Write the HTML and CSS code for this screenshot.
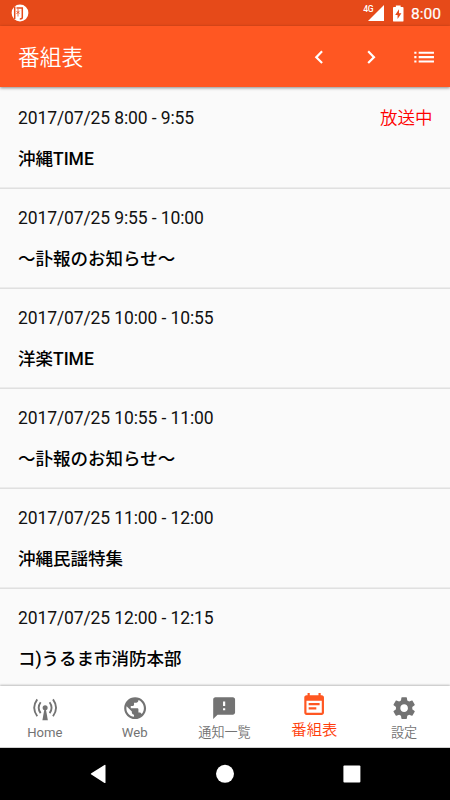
FILE: index.html
```html
<!DOCTYPE html>
<html lang="ja">
<head>
<meta charset="utf-8">
<title>番組表</title>
<link rel="stylesheet" href="styles.css">
</head>
<body>
<div class="screen">
  <div class="status">
    <svg class="status-app" viewBox="0 0 18 18"><circle cx="9" cy="9" r="8.4" fill="#fff"/><path d="M3.700 2.500v12.500M5.500 4h5.800v9.500q0 1.500-2.500 1.500" fill="none" stroke="#e64a19" stroke-width="1.500"/><path d="M7 5v7.500M5.400 7.400l3.200 2M8.600 6.800l-3.200 3.200" fill="none" stroke="#e64a19" stroke-width=".8"/></svg>
    <div class="status-right">
      <span class="net">4G</span>
      <svg class="signal" viewBox="0 0 16 16"><path d="M16 0v16H0z" fill="#fff"/></svg>
      <svg class="battery" viewBox="0 0 11 17"><path d="M3 0h5v1.600h2q1 0 1 1V16q0 1-1 1H1q-1 0-1-1V2.600q0-1 1-1h2z" fill="#fff"/><path d="M6.300 4 2.300 10h2.500v4.300l4-6H6.300z" fill="#e64a19"/></svg>
      <span class="clock">8:00</span>
    </div>
  </div>
  <header class="bar">
    <h1>番組表</h1>
    <div class="actions">
      <svg viewBox="0 0 24 24"><path d="M15.410 7.410 14 6l-6 6 6 6 1.410-1.410L10.830 12z"/></svg>
      <svg viewBox="0 0 24 24"><path d="M10 6 8.590 7.410 13.170 12l-4.580 4.590L10 18l6-6z"/></svg>
      <svg viewBox="0 0 24 24"><path d="M3 9h2V7H3v2zm0 4h2v-2H3v2zm0 4h2v-2H3v2zM7 7v2h14V7H7zm0 6h14v-2H7v2zm0 4h14v-2H7v2z"/></svg>
    </div>
  </header>
  <main class="list">
    <div class="row"><div class="time"><span>2017/07/25 8:00 - 9:55</span><span class="live">放送中</span></div><div class="name">沖縄TIME</div></div>
    <div class="row"><div class="time"><span>2017/07/25 9:55 - 10:00</span></div><div class="name">〜訃報のお知らせ〜</div></div>
    <div class="row"><div class="time"><span>2017/07/25 10:00 - 10:55</span></div><div class="name">洋楽TIME</div></div>
    <div class="row"><div class="time"><span>2017/07/25 10:55 - 11:00</span></div><div class="name">〜訃報のお知らせ〜</div></div>
    <div class="row"><div class="time"><span>2017/07/25 11:00 - 12:00</span></div><div class="name">沖縄民謡特集</div></div>
    <div class="row"><div class="time"><span>2017/07/25 12:00 - 12:15</span></div><div class="name">コ)うるま市消防本部</div></div>
  </main>
  <nav class="tabs">
    <div class="tab"><svg viewBox="0 0 24 24"><g fill="none" stroke="#737373" stroke-width="1.700"><path d="M4.800 4q-5.600 7.700 0 15.400M7.900 6.600q-3.600 5 0 10M19.200 4q5.600 7.700 0 15.400M16.100 6.600q3.600 5 0 10"/></g><circle cx="12" cy="11.600" r="2.300"/><path d="M11.300 13h1.400l1.800 10h-5z"/></svg><span>Home</span></div>
    <div class="tab"><svg viewBox="0 0 24 24"><path d="M12 2C6.480 2 2 6.480 2 12s4.480 10 10 10 10-4.480 10-10S17.520 2 12 2zm-1 17.930c-3.950-.49-7-3.850-7-7.930 0-.62.080-1.210.210-1.790L9 15v1c0 1.100.900 2 2 2v1.930zm6.900-2.540c-.26-.81-1-1.390-1.900-1.390h-1v-3c0-.55-.45-1-1-1H8v-2h2c.55 0 1-.45 1-1V7h2c1.100 0 2-.9 2-2v-.41c2.930 1.190 5 4.060 5 7.410 0 2.080-.8 3.970-2.100 5.390z"/></svg><span>Web</span></div>
    <div class="tab"><svg viewBox="0 0 24 24"><path d="M20 2H4c-1.100 0-1.990.9-1.990 2L2 22l4-4h14c1.100 0 2-.9 2-2V4c0-1.100-.9-2-2-2zm-7 12h-2v-2h2v2zm0-4h-2V6h2v4z"/></svg><span class="jp">通知一覧</span></div>
    <div class="tab active"><svg viewBox="0 0 24 24"><path d="M17 10H7v2h10v-2zm2-7h-1V1h-2v2H8V1H6v2H5c-1.110 0-1.990.9-1.990 2L3 19c0 1.100.890 2 2 2h14c1.100 0 2-.9 2-2V5c0-1.100-.9-2-2-2zm0 16H5V8h14v11zm-5-5H7v2h7v-2z"/></svg><span class="jp">番組表</span></div>
    <div class="tab"><svg viewBox="0 0 24 24"><path d="M19.430 12.980c.04-.32.070-.64.070-.98s-.03-.66-.07-.98l2.110-1.650c.19-.15.240-.42.120-.64l-2-3.460c-.12-.22-.39-.3-.61-.22l-2.490 1c-.52-.4-1.080-.73-1.690-.98l-.38-2.650C14.460 2.180 14.250 2 14 2h-4c-.25 0-.46.180-.49.420l-.38 2.650c-.61.250-1.170.590-1.690.980l-2.490-1c-.23-.09-.49 0-.61.220l-2 3.460c-.13.220-.07.490.120.640l2.110 1.650c-.04.320-.07.650-.07.980s.03.660.07.980l-2.110 1.650c-.19.150-.24.420-.12.640l2 3.460c.12.220.390.300.610.220l2.490-1c.52.400 1.080.730 1.690.980l.38 2.650c.03.240.240.420.490.420h4c.25 0 .46-.18.490-.42l.38-2.650c.61-.25 1.170-.59 1.690-.98l2.490 1c.23.090.490 0 .610-.22l2-3.460c.12-.22.070-.49-.12-.64l-2.110-1.650zM12 15.500c-1.930 0-3.500-1.570-3.500-3.500s1.570-3.500 3.500-3.500 3.500 1.570 3.500 3.500-1.570 3.500-3.500 3.500z"/></svg><span class="jp">設定</span></div>
  </nav>
  <div class="sysnav">
    <svg viewBox="0 0 18 20"><path d="M16.500 1.400v17q0 1-1 .5L2.300 10.600q-1.200-.7 0-1.400L15.500.9q1-.5 1 .5z"/></svg>
    <svg viewBox="0 0 18 20"><circle cx="9" cy="9.800" r="9"/></svg>
    <svg viewBox="0 0 18 20"><rect x=".4" y="1.400" width="17" height="17" rx="1"/></svg>
  </div>
</div>
</body>
</html>
```

FILE: styles.css
```css
* { box-sizing: border-box; }
body { margin: 0; font-family: Roboto, "Noto Sans CJK JP", sans-serif; }
svg { display: block; flex: none; }
.screen { width: 450px; height: 800px; display: flex; flex-direction: column; overflow: hidden; background: #fafafa; }
.status { flex: none; height: 26px; background: #e64a19; display: flex; justify-content: space-between; align-items: center; padding: 0 9px 0 10.500px; color: #fff; }
.status-app { width: 18px; height: 18px; }
.status-right { display: flex; align-items: center; }
.net { font-size: 8.500px; font-weight: 500; letter-spacing: -.4px; line-height: 10px; margin: -8px -5px 0 0; position: relative; }
.signal { width: 16px; height: 16px; }
.battery { width: 10.500px; height: 17px; margin-left: 9px; }
.clock { font-size: 15.500px; line-height: 20px; font-weight: 400; margin: 1px 0 0 7.500px; -webkit-text-stroke: .2px #fff; }
.bar { flex: none; height: 61px; background: #ff5722; color: #fff; display: flex; align-items: center; justify-content: space-between; padding: 1px 13px 0 18px; position: relative; box-shadow: 0 1px 3px rgba(0,0,0,.45); }
.bar h1 { margin: 2px 0 0; font-size: 21.700px; line-height: 30px; font-weight: 350; }
.actions { display: flex; gap: 26.250px; }
.actions svg { width: 26.250px; height: 26.250px; fill: #fff; }
.list { flex: 1; min-height: 0; overflow: hidden; padding-top: 1px; }
.row { height: 100px; padding: 18px 17.500px 0 18px; color: #111; font-size: 17.500px; line-height: 24px; box-shadow: inset 0 -1px 0 #ececec, 0 1px 0 #e0e0e0; }
.time { display: flex; justify-content: space-between; height: 24px; letter-spacing: -.11px; }
.live { color: #f00; font-weight: 350; letter-spacing: 0; }
.name { margin-top: 17px; font-weight: 500; color: #000; }
.tabs { flex: none; height: 62px; background: #fff; display: grid; grid-template-columns: repeat(5, 1fr); position: relative; padding-right: 1px; border-bottom: 1px solid #d0d0d0; box-shadow: 0 -1px 2px rgba(0,0,0,.25); }
.tab { display: flex; flex-direction: column; align-items: center; padding-top: 9px; font-size: 13.120px; line-height: 18px; color: #737373; }
.tab svg { width: 26.250px; height: 26.250px; fill: #737373; }
.tab span { margin-top: 3px; }
.jp { font-weight: 350; }
.tab.active { color: #ff3d0a; font-size: 15.300px; padding-top: 6px; }
.active svg { fill: #ff5722; }
.sysnav { flex: none; height: 52px; background: #000; display: flex; justify-content: center; align-items: center; gap: 109px; }
.sysnav svg { width: 18px; height: 20px; fill: #fff; }
```
